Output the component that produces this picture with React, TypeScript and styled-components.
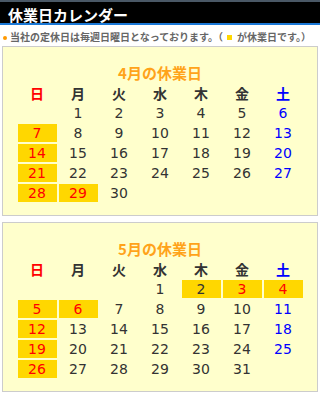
import styled, { createGlobalStyle } from "styled-components";

const GlobalStyle = createGlobalStyle`
  body {
    margin: 0;
    background: #ffffff;
    font-family: "DejaVu Sans", "Noto Sans CJK JP", sans-serif;
  }
`;

const COLOR_HOLIDAY_BG = "#ffd700";
const COLOR_BOX_BG = "#ffffcc";

type DayKind = "normal" | "sun" | "sat" | "off" | "offDark";

type Month = {
  title: string;
  firstWeekday: number;
  days: number;
  off: number[];
  offDark: number[];
};

const months: Month[] = [
  { title: "4月の休業日", firstWeekday: 1, days: 30, off: [7, 14, 21, 28, 29], offDark: [] },
  { title: "5月の休業日", firstWeekday: 3, days: 31, off: [3, 4, 5, 6, 12, 19, 26], offDark: [2] },
];

const weekdays = ["日", "月", "火", "水", "木", "金", "土"];

const Page = styled.div`
  width: 320px;
`;

const Header = styled.h1`
  margin: 0;
  height: 17px;
  padding: 4px 0 0 8px;
  background: #000;
  border-top: 2px solid #4a5866;
  border-bottom: 2px solid #1a78d6;
  color: #fff;
  font-family: "Noto Sans CJK JP", sans-serif;
  font-size: 15px;
  font-weight: bold;
  line-height: 17px;
`;

const Note = styled.p`
  display: flex;
  align-items: center;
  margin: 5px 0 2px 3px;
  height: 14px;
  color: #666;
  font-family: "Noto Sans CJK JP", sans-serif;
  font-size: 10px;
  font-weight: bold;
  line-height: 14px;
  white-space: nowrap;
`;

const Dot = styled.span`
  width: 4px;
  height: 4px;
  margin: 1px 3px 0 0;
  border-radius: 50%;
  background: #ff9900;
`;

const Square = styled.span`
  display: inline-block;
  width: 5px;
  height: 5px;
  margin: 0 5px 0 4px;
  background: ${COLOR_HOLIDAY_BG};
`;

const Box = styled.section<{ $first?: boolean }>`
  margin: ${(p) => (p.$first ? "0" : "6px")} 2px 0 2px;
  padding: 17px 0 11px;
  border: 1px solid #cccccc;
  background: ${COLOR_BOX_BG};
`;

const Title = styled.h2`
  margin: 0;
  color: #ffa31a;
  font-family: "Noto Sans CJK JP", sans-serif;
  font-size: 15px;
  font-weight: bold;
  line-height: 18px;
  text-align: center;
`;

const Grid = styled.div`
  display: grid;
  grid-template-columns: repeat(7, 39px);
  grid-auto-rows: 18px;
  gap: 2px;
  padding: 2px;
  width: max-content;
  margin: 0 auto;
`;

const WeekHead = styled.div<{ $color: string }>`
  height: 19px;
  color: ${(p) => p.$color};
  font-family: "Noto Sans CJK JP", sans-serif;
  font-size: 14px;
  font-weight: bold;
  line-height: 19px;
  text-align: center;
`;

const kindColor: Record<DayKind, string> = {
  normal: "#333333",
  sun: "#ff0000",
  sat: "#0000ff",
  off: "#ff0000",
  offDark: "#333333",
};

const Day = styled.div<{ $kind: DayKind }>`
  background: ${(p) => (p.$kind === "off" || p.$kind === "offDark" ? COLOR_HOLIDAY_BG : "transparent")};
  color: ${(p) => kindColor[p.$kind]};
  font-size: 14px;
  line-height: 18px;
  text-align: center;
`;

const Calendar = ({ month, first }: { month: Month; first?: boolean }) => {
  const cells: (number | null)[] = [];
  for (let i = 0; i < month.firstWeekday; i++) cells.push(null);
  for (let d = 1; d <= month.days; d++) cells.push(d);

  const kindOf = (d: number, col: number): DayKind => {
    if (month.off.includes(d)) return "off";
    if (month.offDark.includes(d)) return "offDark";
    if (col === 0) return "sun";
    if (col === 6) return "sat";
    return "normal";
  };

  return (
    <Box $first={first}>
      <Title>{month.title}</Title>
      <Grid>
        {weekdays.map((w, i) => (
          <WeekHead key={w} $color={i === 0 ? "#ff0000" : i === 6 ? "#0000ff" : "#333333"}>
            {w}
          </WeekHead>
        ))}
        {cells.map((d, i) =>
          d === null ? (
            <Day key={`e${i}`} $kind="normal" />
          ) : (
            <Day key={d} $kind={kindOf(d, i % 7)}>
              {d}
            </Day>
          )
        )}
      </Grid>
    </Box>
  );
};

export default function App() {
  return (
    <Page>
      <GlobalStyle />
      <Header>休業日カレンダー</Header>
      <Note>
        <Dot />
        当社の定休日は毎週日曜日となっております。（<Square />が休業日です。）
      </Note>
      {months.map((m, i) => (
        <Calendar key={m.title} month={m} first={i === 0} />
      ))}
    </Page>
  );
}
